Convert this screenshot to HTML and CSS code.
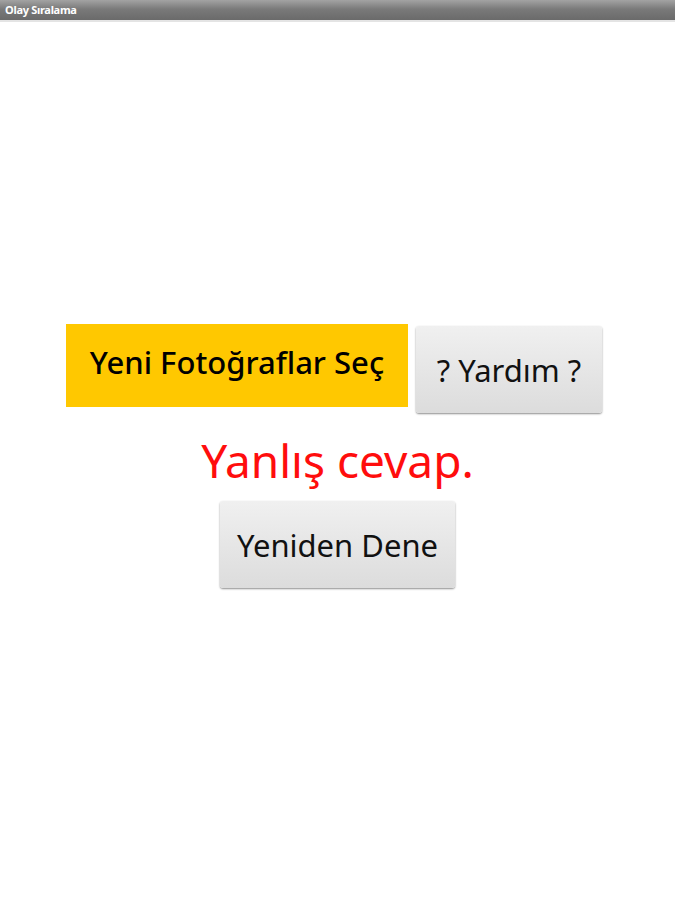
FILE: index.html
```html
<!DOCTYPE html>
<html lang="tr">
<head>
    <meta charset="UTF-8">
    <meta name="viewport" content="width=device-width, initial-scale=1.0">
    <title>Olay Sıralama</title>
    <link rel="stylesheet" href="styles.css">
</head>
<body>
    <div class="titlebar">Olay Sıralama</div>

    <main class="content">
        <div class="actions">
            <button class="btn btn-new">Yeni Fotoğraflar Seç</button>
            <button class="btn btn-gray btn-help">? Yardım ?</button>
        </div>
        <p class="result">Yanlış cevap.</p>
        <button class="btn btn-gray btn-retry">Yeniden Dene</button>
    </main>
</body>
</html>
```

FILE: styles.css
```css
body {
    margin: 0;
    background: #fff;
    font-family: "Noto Sans", "Open Sans", sans-serif;
    min-height: 100vh;
}
.titlebar {
    height: 20px;
    line-height: 20px;
    padding-left: 5px;
    font-size: 11px;
    font-weight: bold;
    color: #fff;
    background: linear-gradient(#a3a3a3, #7a7a7a 45%, #6a6a6a);
    border-bottom: 2px solid #e4e4e4;
    letter-spacing: -0.3px;
}
.content {
    display: flex;
    flex-direction: column;
    align-items: center;
    padding-top: 302px;
}
.actions {
    display: flex;
    align-items: flex-start;
    gap: 8px;
    padding-right: 7px;
}
.btn {
    font-family: inherit;
    font-size: 31px;
    color: #111;
    border: none;
    padding: 0;
    cursor: pointer;
}
.btn-new {
    width: 342px;
    height: 83px;
    padding-bottom: 8px;
    background: #ffc800;
    color: #000;
    font-weight: 500;
}
.btn-gray {
    background: linear-gradient(#f0f0f0, #dcdcdc);
    border-radius: 3px;
    box-shadow: 0 1px 2px rgba(0,0,0,0.45);
}
.btn-help {
    width: 186px;
    height: 87px;
    margin-top: 2px;
}
.result {
    margin: 12px 0 6px;
    font-size: 46px;
    color: #ff0d0d;
    line-height: 70px;
}
.btn-retry {
    width: 235px;
    height: 87px;
}
```
